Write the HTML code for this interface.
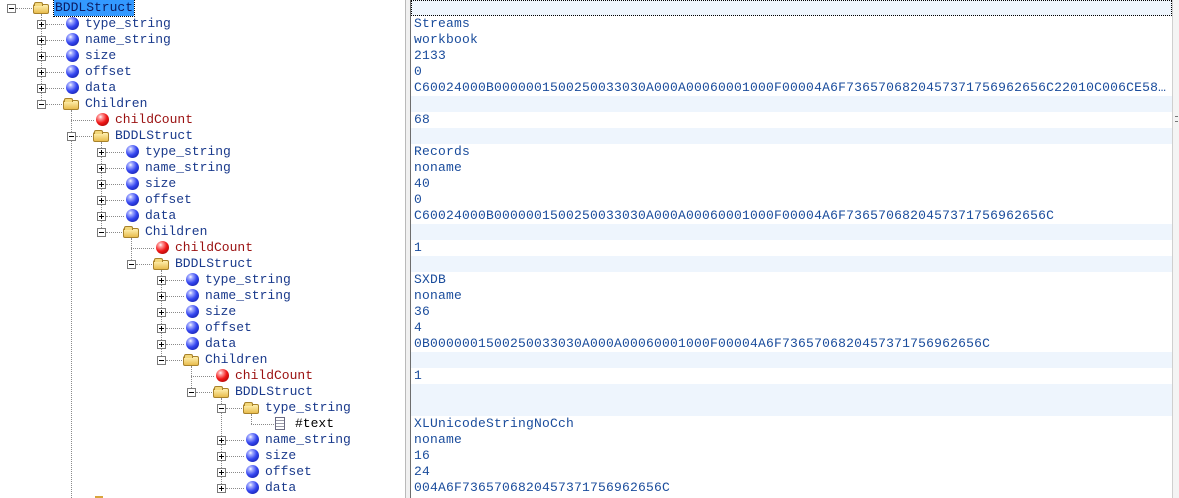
<!DOCTYPE html>
<html><head><meta charset="utf-8"><style>
*{margin:0;padding:0;box-sizing:border-box}
body{width:1179px;height:498px;overflow:hidden;background:#fff;position:relative;font-family:"Liberation Mono",monospace;font-size:13px}
.r{position:absolute;left:0;height:16px;width:405px}
.n{position:absolute;top:0;height:16px;width:360px}
.b{position:absolute;left:7px;top:4px;width:9px;height:9px;border:1px solid #7a7a7a;background:#fff}
.b::before{content:"";position:absolute;left:1px;top:3px;width:5px;height:1px;background:#000}
.p::after{content:"";position:absolute;left:3px;top:1px;width:1px;height:5px;background:#000}
.h{position:absolute;top:8px;left:16px;width:18px;border-top:1px dotted #8a8a8a}
.hl{left:11px;width:23px}
.ball{position:absolute;left:36px;top:1px;width:13px;height:13px;border-radius:50%;background:radial-gradient(circle at 35% 30%,#fff 0,#a8b0ff 15%,#3446f0 50%,#0a1290 100%)}
.red{background:radial-gradient(circle at 35% 30%,#fff 0,#ffa0a0 15%,#f01818 50%,#8a0000 100%)}
.f{position:absolute;left:33px;top:4px;width:16px;height:10px;border:1px solid #a8822a;border-radius:2px;background:linear-gradient(#fff1b0,#e8bc4e)}
.f::before{content:"";position:absolute;left:0px;top:-3px;width:7px;height:3px;border:1px solid #a8822a;border-bottom:none;border-radius:2px 2px 0 0;background:#f3d77a}
.d{position:absolute;left:35px;top:1px;width:10px;height:13px;border:1px solid #6a6a80;background:repeating-linear-gradient(#fff 0 2px,#9a9aa8 2px 3px)}
.t{position:absolute;left:55px;top:0;line-height:16px;color:#1a3a8c;white-space:nowrap}
.k{color:#000}
.rc{color:#9a1010}
.sel{background:#3399ff;outline:1px dotted #000;left:54px;padding:0 1px;color:#0a1a60}
.v{position:absolute;left:414px;line-height:16px;color:#1a4c9c;white-space:nowrap;letter-spacing:0.2px}
.lb{position:absolute;left:411px;width:761px;height:16px;background:#eef5fd}
.vl{position:absolute;width:0;border-left:1px dotted #8a8a8a}
</style></head><body>
<div style="position:absolute;left:405px;top:0;width:1px;height:498px;background:#b9b9b9"></div>
<div style="position:absolute;left:406px;top:0;width:4px;height:498px;background:#f0f0f0"></div>
<div style="position:absolute;left:410px;top:0;width:1px;height:498px;background:#6d6d6d"></div>
<div style="position:absolute;left:1172px;top:0;width:7px;height:498px;background:#f4f4f4;border-left:1px solid #cfcfcf"></div>
<div style="position:absolute;left:1175px;top:116px;width:3px;height:6px;border-top:1px solid #777;border-bottom:1px solid #777"></div>

<div class="lb" style="top:0;outline:1px dotted #000;outline-offset:-1px"></div>
<div class="lb" style="top:96px"></div>
<div class="lb" style="top:128px"></div>
<div class="lb" style="top:224px"></div>
<div class="lb" style="top:256px"></div>
<div class="lb" style="top:352px"></div>
<div class="lb" style="top:384px;height:32px"></div>

<div class="vl" style="left:41px;top:14px;height:90px"></div>
<div class="vl" style="left:71px;top:110px;height:388px"></div>
<div class="vl" style="left:101px;top:142px;height:90px"></div>
<div class="vl" style="left:131px;top:238px;height:26px"></div>
<div class="vl" style="left:161px;top:270px;height:90px"></div>
<div class="vl" style="left:191px;top:366px;height:26px"></div>
<div class="vl" style="left:221px;top:398px;height:90px"></div>
<div class="vl" style="left:251px;top:414px;height:10px"></div>

<div class="r" style="top:0"><div class="n" style="left:0"><i class="b"></i><i class="h"></i><i class="f"></i><span class="t sel">BDDLStruct</span></div></div>
<div class="r" style="top:16px"><div class="n" style="left:30px"><i class="b p"></i><i class="h"></i><i class="ball"></i><span class="t">type_string</span></div></div>
<div class="r" style="top:32px"><div class="n" style="left:30px"><i class="b p"></i><i class="h"></i><i class="ball"></i><span class="t">name_string</span></div></div>
<div class="r" style="top:48px"><div class="n" style="left:30px"><i class="b p"></i><i class="h"></i><i class="ball"></i><span class="t">size</span></div></div>
<div class="r" style="top:64px"><div class="n" style="left:30px"><i class="b p"></i><i class="h"></i><i class="ball"></i><span class="t">offset</span></div></div>
<div class="r" style="top:80px"><div class="n" style="left:30px"><i class="b p"></i><i class="h"></i><i class="ball"></i><span class="t">data</span></div></div>
<div class="r" style="top:96px"><div class="n" style="left:30px"><i class="b"></i><i class="h"></i><i class="f"></i><span class="t">Children</span></div></div>
<div class="r" style="top:112px"><div class="n" style="left:60px"><i class="h hl"></i><i class="ball red"></i><span class="t rc">childCount</span></div></div>
<div class="r" style="top:128px"><div class="n" style="left:60px"><i class="b"></i><i class="h"></i><i class="f"></i><span class="t">BDDLStruct</span></div></div>
<div class="r" style="top:144px"><div class="n" style="left:90px"><i class="b p"></i><i class="h"></i><i class="ball"></i><span class="t">type_string</span></div></div>
<div class="r" style="top:160px"><div class="n" style="left:90px"><i class="b p"></i><i class="h"></i><i class="ball"></i><span class="t">name_string</span></div></div>
<div class="r" style="top:176px"><div class="n" style="left:90px"><i class="b p"></i><i class="h"></i><i class="ball"></i><span class="t">size</span></div></div>
<div class="r" style="top:192px"><div class="n" style="left:90px"><i class="b p"></i><i class="h"></i><i class="ball"></i><span class="t">offset</span></div></div>
<div class="r" style="top:208px"><div class="n" style="left:90px"><i class="b p"></i><i class="h"></i><i class="ball"></i><span class="t">data</span></div></div>
<div class="r" style="top:224px"><div class="n" style="left:90px"><i class="b"></i><i class="h"></i><i class="f"></i><span class="t">Children</span></div></div>
<div class="r" style="top:240px"><div class="n" style="left:120px"><i class="h hl"></i><i class="ball red"></i><span class="t rc">childCount</span></div></div>
<div class="r" style="top:256px"><div class="n" style="left:120px"><i class="b"></i><i class="h"></i><i class="f"></i><span class="t">BDDLStruct</span></div></div>
<div class="r" style="top:272px"><div class="n" style="left:150px"><i class="b p"></i><i class="h"></i><i class="ball"></i><span class="t">type_string</span></div></div>
<div class="r" style="top:288px"><div class="n" style="left:150px"><i class="b p"></i><i class="h"></i><i class="ball"></i><span class="t">name_string</span></div></div>
<div class="r" style="top:304px"><div class="n" style="left:150px"><i class="b p"></i><i class="h"></i><i class="ball"></i><span class="t">size</span></div></div>
<div class="r" style="top:320px"><div class="n" style="left:150px"><i class="b p"></i><i class="h"></i><i class="ball"></i><span class="t">offset</span></div></div>
<div class="r" style="top:336px"><div class="n" style="left:150px"><i class="b p"></i><i class="h"></i><i class="ball"></i><span class="t">data</span></div></div>
<div class="r" style="top:352px"><div class="n" style="left:150px"><i class="b"></i><i class="h"></i><i class="f"></i><span class="t">Children</span></div></div>
<div class="r" style="top:368px"><div class="n" style="left:180px"><i class="h hl"></i><i class="ball red"></i><span class="t rc">childCount</span></div></div>
<div class="r" style="top:384px"><div class="n" style="left:180px"><i class="b"></i><i class="h"></i><i class="f"></i><span class="t">BDDLStruct</span></div></div>
<div class="r" style="top:400px"><div class="n" style="left:210px"><i class="b"></i><i class="h"></i><i class="f"></i><span class="t">type_string</span></div></div>
<div class="r" style="top:416px"><div class="n" style="left:240px"><i class="h hl"></i><i class="d"></i><span class="t k">#text</span></div></div>
<div class="r" style="top:432px"><div class="n" style="left:210px"><i class="b p"></i><i class="h"></i><i class="ball"></i><span class="t">name_string</span></div></div>
<div class="r" style="top:448px"><div class="n" style="left:210px"><i class="b p"></i><i class="h"></i><i class="ball"></i><span class="t">size</span></div></div>
<div class="r" style="top:464px"><div class="n" style="left:210px"><i class="b p"></i><i class="h"></i><i class="ball"></i><span class="t">offset</span></div></div>
<div class="r" style="top:480px"><div class="n" style="left:210px"><i class="b p"></i><i class="h"></i><i class="ball"></i><span class="t">data</span></div></div>
<div style="position:absolute;left:95px;top:496px;width:8px;height:2px;background:#d9a53c"></div>

<div class="v" style="top:16px">Streams</div>
<div class="v" style="top:32px">workbook</div>
<div class="v" style="top:48px">2133</div>
<div class="v" style="top:64px">0</div>
<div class="v" style="top:80px">C60024000B0000001500250033030A000A00060001000F00004A6F7365706820457371756962656C22010C006CE58…</div>
<div class="v rc" style="top:112px">68</div>
<div class="v" style="top:144px">Records</div>
<div class="v" style="top:160px">noname</div>
<div class="v" style="top:176px">40</div>
<div class="v" style="top:192px">0</div>
<div class="v" style="top:208px">C60024000B0000001500250033030A000A00060001000F00004A6F7365706820457371756962656C</div>
<div class="v rc" style="top:240px">1</div>
<div class="v" style="top:272px">SXDB</div>
<div class="v" style="top:288px">noname</div>
<div class="v" style="top:304px">36</div>
<div class="v" style="top:320px">4</div>
<div class="v" style="top:336px">0B0000001500250033030A000A00060001000F00004A6F7365706820457371756962656C</div>
<div class="v rc" style="top:368px">1</div>
<div class="v k" style="top:416px">XLUnicodeStringNoCch</div>
<div class="v" style="top:432px">noname</div>
<div class="v" style="top:448px">16</div>
<div class="v" style="top:464px">24</div>
<div class="v" style="top:480px">004A6F7365706820457371756962656C</div>
</body></html>
